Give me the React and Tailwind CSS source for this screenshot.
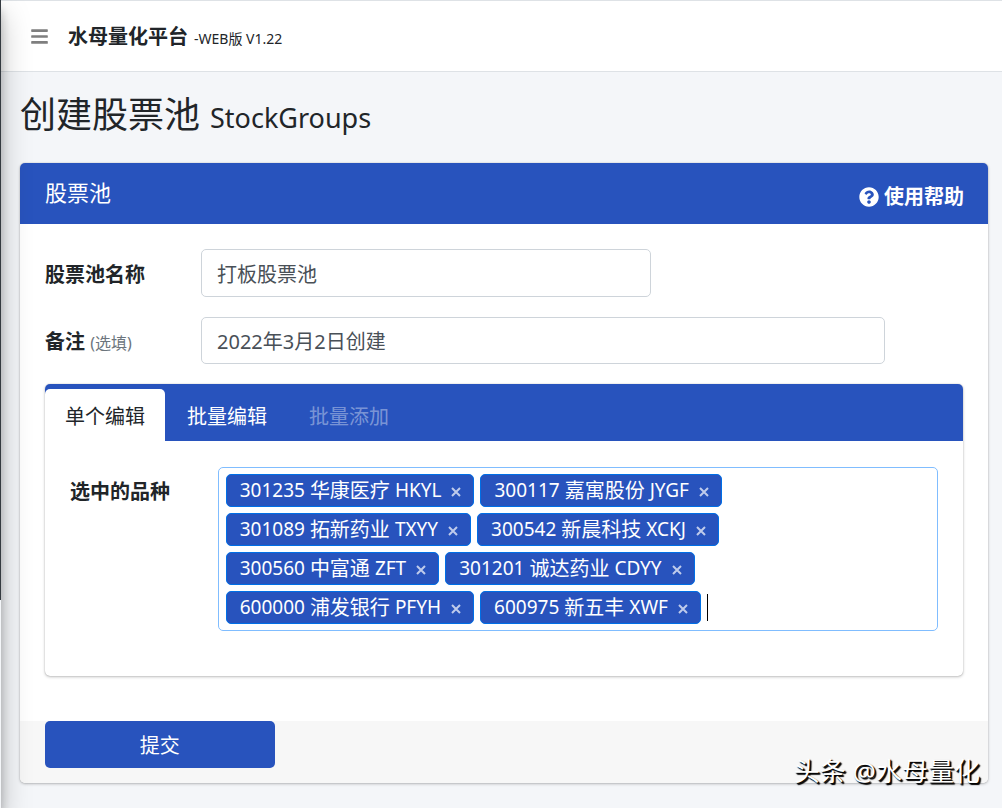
import { FaBars, FaQuestionCircle } from 'react-icons/fa';

const stocks = [
  { code: '301235', name: '华康医疗', short: 'HKYL' },
  { code: '300117', name: '嘉寓股份', short: 'JYGF' },
  { code: '301089', name: '拓新药业', short: 'TXYY' },
  { code: '300542', name: '新晨科技', short: 'XCKJ' },
  { code: '300560', name: '中富通', short: 'ZFT' },
  { code: '301201', name: '诚达药业', short: 'CDYY' },
  { code: '600000', name: '浦发银行', short: 'PFYH' },
  { code: '600975', name: '新五丰', short: 'XWF' },
];

const StockTag = ({ code, name, short }) => (
  <span className="flex h-[33px] items-center gap-[5px] whitespace-nowrap rounded-[5px] border border-[#006fe6] bg-[#2853bd] pl-[13px] pr-3 text-[19px] text-white">
    <span>{code}</span>
    <span className="text-[20px]">{name}</span>
    <span>{short}</span>
    <button type="button" aria-label={`移除 ${name}`} className="ml-[5px] text-white/70">
      <svg viewBox="0 0 10 10" className="mt-[3px] size-[10px]" stroke="currentColor" strokeWidth="2">
        <path d="M1 1 L9 9 M9 1 L1 9" />
      </svg>
    </button>
  </span>
);

// 隐藏的侧边栏，只露出边缘和阴影
const Sidebar = () => (
  <aside className="pointer-events-none fixed inset-y-0 -left-[249px] z-10 w-[250px] shadow-[0_14px_28px_rgba(0,0,0,0.25),0_10px_10px_rgba(0,0,0,0.22)]">
    <div className="h-[600px] bg-[#343a40]"></div>
  </aside>
);

const Header = () => (
  <header className="flex h-[72px] items-center border-y border-[#dee2e6] bg-white px-[30px]">
    <button type="button" aria-label="菜单" className="text-[#7f7f7f]">
      <FaBars size={19} />
    </button>
    <div className="ml-[19px] flex items-baseline gap-[6px] pt-[2px]">
      <b className="text-[20px]">水母量化平台</b>
      <span className="text-[14px]">-WEB版 V1.22</span>
    </div>
  </header>
);

const GroupEditor = () => (
  <section className="overflow-hidden rounded-[5px] bg-white shadow-[0_0_1px_rgba(0,0,0,0.3),0_1px_3px_rgba(0,0,0,0.25)]">
    <div role="tablist" className="flex h-[57px] items-stretch gap-px bg-[#2853bd] pt-[5px] text-[20px]">
      <button type="button" role="tab" aria-selected="true" className="rounded-t-[5px] bg-white px-5 pt-[3px]">单个编辑</button>
      <button type="button" role="tab" className="px-[21px] pt-[3px] text-white">批量编辑</button>
      <button type="button" role="tab" disabled className="px-5 pt-[3px] text-white/40">批量添加</button>
    </div>
    <div className="grid grid-cols-12 gap-x-[18px] px-[25px] pt-[26px] pb-[45px]">
      <label htmlFor="stocks" className="col-span-2 whitespace-nowrap pt-[10px] text-[20px] leading-[30px] font-bold">选中的品种</label>
      <div className="col-span-10 rounded-[5px] border border-[#80bdff] py-[6px] px-[7px]">
        <div className="flex max-w-[510px] flex-wrap gap-[6px]">
          {stocks.map((stock) => (
            <StockTag key={stock.code} {...stock} />
          ))}
          <div className="flex items-center">
            <span className="h-[27px] w-px bg-black"></span>
            <input id="stocks" className="w-2 outline-none" />
          </div>
        </div>
      </div>
    </div>
  </section>
);

export default function App() {
  return (
    <div className="relative min-h-screen bg-[#f4f6f9] font-['Noto_Sans','Noto_Sans_CJK_SC',sans-serif] text-[#212529]">
      <Sidebar />
      <Header />

      <main className="pr-[14px] pb-[25px] pl-5">
        <h1 className="flex h-[91px] items-baseline gap-[10px] pt-[16px] text-[36px] leading-[54px]">
          创建股票池 <small className="text-[27px]">StockGroups</small>
        </h1>

        <form className="overflow-hidden rounded-[5px] bg-white shadow-[0_0_1px_rgba(0,0,0,0.3),0_1px_3px_rgba(0,0,0,0.25)]" onSubmit={(e) => e.preventDefault()}>
          <div className="flex h-[61px] items-center justify-between bg-[#2853bd] px-6 text-white">
            <h2 className="pb-[3px] pl-px text-[22px]">股票池</h2>
            <a href="#help" className="flex items-center gap-[5px] pt-[7px] text-[20px] font-bold">
              <FaQuestionCircle size={20} />
              使用帮助
            </a>
          </div>

          <div className="px-[25px] pt-[25px] pb-[45px]">
            <div className="mb-5 grid grid-cols-12 items-center gap-x-[18px]">
              <label htmlFor="name" className="col-span-2 pt-[3px] text-[20px] font-bold">股票池名称</label>
              <input id="name" defaultValue="打板股票池" className="col-span-6 h-12 rounded-[5px] border border-[#ced4da] px-[15px] text-[20px] text-[#495057]" />
            </div>
            <div className="mb-5 grid grid-cols-12 items-center gap-x-[18px]">
              <label htmlFor="remark" className="col-span-2 pt-[2px] text-[20px] font-bold">
                备注 <small className="text-[16px] font-normal text-[#6c757d]">(选填)</small>
              </label>
              <input id="remark" defaultValue="2022年3月2日创建" className="col-span-9 h-[47px] rounded-[5px] border border-[#ced4da] px-[15px] text-[20px] text-[#495057]" />
            </div>
            <GroupEditor />
          </div>

          <div className="bg-[#f7f7f7] px-[25px] pb-[15px]">
            <button type="submit" className="h-[47px] w-1/4 rounded-[5px] bg-[#2853bd] pt-[3px] text-[20px] text-white">提交</button>
          </div>
        </form>
      </main>

      {/* 水印 */}
      <div className="absolute right-[22px] bottom-[19px] text-[26px] leading-[36px] text-white [text-shadow:1px_1px_1px_#000,2px_2px_1px_#000]">
        头条 @水母量化
      </div>
    </div>
  );
}
